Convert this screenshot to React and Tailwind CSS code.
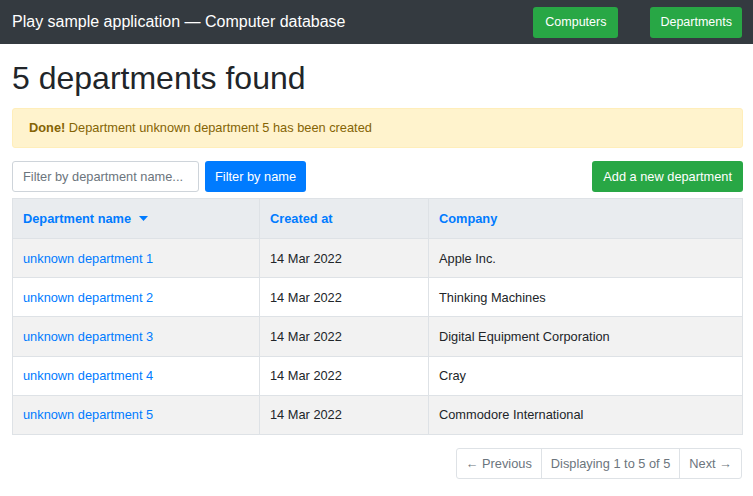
export default function App() {
  const rows = [
    ["unknown department 1", "14 Mar 2022", "Apple Inc."],
    ["unknown department 2", "14 Mar 2022", "Thinking Machines"],
    ["unknown department 3", "14 Mar 2022", "Digital Equipment Corporation"],
    ["unknown department 4", "14 Mar 2022", "Cray"],
    ["unknown department 5", "14 Mar 2022", "Commodore International"],
  ];
  return (
    <div className="min-h-[496px] bg-white text-[#212529] text-[12.8px]" style={{ fontFamily: '"Liberation Sans", Arial, sans-serif' }}>
      <nav className="h-[44px] bg-[#343a40] flex items-center pl-3 pr-[11px]">
        <div className="text-white text-[16px] flex-1">Play sample application — Computer database</div>
        <button className="h-[31px] px-[12px] bg-[#28a745] text-white rounded-[3px] text-[12.5px] ml-[32px]">Computers</button>
        <button className="h-[31px] px-[10px] bg-[#28a745] text-white rounded-[3px] text-[12.5px] ml-[32px]">Departments</button>
      </nav>
      <div className="pl-3 pr-[10px]">
        <h1 className="text-[32px] leading-[38px] pt-[15px] pb-[11px]">5 departments found</h1>
        <div className="h-[40px] bg-[#fff3cd] border border-[#ffeeba] rounded-[3px] text-[#856404] flex items-center px-[16px]">
          <span><b>Done!</b> Department unknown department 5 has been created</span>
        </div>
        <div className="flex items-center mt-[13px] h-[31px]">
          <input
            className="w-[187px] h-[31px] border border-[#ced4da] rounded-[3px] px-[10px] text-[12.8px] placeholder-[#6c757d] outline-none"
            placeholder="Filter by department name..."
          />
          <button className="h-[31px] px-[10px] bg-[#007bff] text-white rounded-[3px] ml-[6px]">Filter by name</button>
          <div className="flex-1" />
          <button className="h-[31px] px-[11px] bg-[#28a745] text-white rounded-[3px]">Add a new department</button>
        </div>
        <table className="w-full mt-[6px] border-collapse border border-[#dee2e6]">
          <thead>
            <tr className="h-[40px] bg-[#e9ecef]">
              <th className="text-left font-bold text-[#007bff] px-[10px] border border-[#dee2e6] w-[247px]">
                <span className="inline-flex items-center">Department name<svg width="9" height="5" viewBox="0 0 9 5" className="ml-[8px]"><path d="M0 0h9L4.5 5z" fill="#007bff" /></svg></span>
              </th>
              <th className="text-left font-bold text-[#007bff] px-[10px] border border-[#dee2e6] w-[169px]">Created at</th>
              <th className="text-left font-bold text-[#007bff] px-[10px] border border-[#dee2e6]">Company</th>
            </tr>
          </thead>
          <tbody>
            {rows.map((r, i) => (
              <tr key={i} className={"h-[39.2px] " + (i % 2 === 0 ? "bg-[#f2f2f2]" : "bg-white")}>
                <td className="px-[10px] border border-[#dee2e6] text-[#007bff]">{r[0]}</td>
                <td className="px-[10px] border border-[#dee2e6]">{r[1]}</td>
                <td className="px-[10px] border border-[#dee2e6]">{r[2]}</td>
              </tr>
            ))}
          </tbody>
        </table>
        <div className="flex justify-end mt-[13px]">
          <div className="flex h-[31px] border border-[#dee2e6] rounded-[3px] text-[#6c757d] mr-[1px]">
            <div className="px-[9px] flex items-center border-r border-[#dee2e6]">← Previous</div>
            <div className="px-[9px] flex items-center border-r border-[#dee2e6]">Displaying 1 to 5 of 5</div>
            <div className="px-[9px] flex items-center">Next →</div>
          </div>
        </div>
      </div>
    </div>
  );
}
